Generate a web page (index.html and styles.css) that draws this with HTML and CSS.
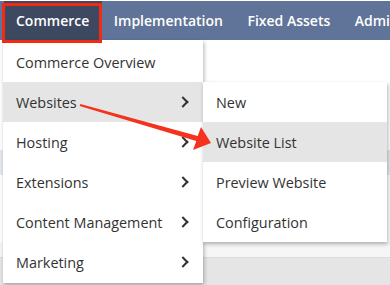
FILE: index.html
```html
<!DOCTYPE html>
<html lang="en">
<head>
    <meta charset="UTF-8">
    <meta name="viewport" content="width=device-width, initial-scale=1.0">
    <title>Commerce menu</title>
    <link rel="stylesheet" href="styles.css">
</head>
<body>
    <div class="page">
        <nav class="topnav">
            <a class="tab active">Commerce</a>
            <a class="tab">Implementation</a>
            <a class="tab">Fixed Assets</a>
            <a class="tab">Administration</a>
        </nav>

        <div class="content">
            <div class="band-white"></div>
            <div class="band-blue"></div>
            <div class="band-white tall"></div>
            <div class="band-light"></div>
            <div class="band-gray"></div>
        </div>

        <!-- dropdown -->
        <ul class="menu">
            <li class="item">Commerce Overview</li>
            <li class="item has-sub hover">Websites <span class="chev"></span></li>
            <li class="item has-sub">Hosting <span class="chev"></span></li>
            <li class="item has-sub">Extensions <span class="chev"></span></li>
            <li class="item has-sub">Content Management <span class="chev"></span></li>
            <li class="item has-sub">Marketing <span class="chev"></span></li>
        </ul>

        <ul class="submenu">
            <li class="item">New</li>
            <li class="item hover">Website List</li>
            <li class="item">Preview Website</li>
            <li class="item">Configuration</li>
        </ul>

        <!-- annotations -->
        <div class="highlight-box"></div>
        <svg class="arrow" width="390" height="285" viewBox="0 0 390 285">
            <polygon points="80.3,104 197.7,136.1 201,127 211,143 193,150 196.3,140.9 79.7,106" fill="#f4321d"/>
        </svg>
    </div>
</body>
</html>
```

FILE: styles.css
```css
body {
    margin: 0;
    background-color: #fff;
    font-family: "Open Sans", Arial, sans-serif;
}

.page {
    position: relative;
    width: 390px;
    height: 285px;
    overflow: hidden;
}

.topnav {
    display: flex;
    height: 39px;
    margin-top: 1px;
    padding-left: 4px;
    background-color: #5f7498;
    white-space: nowrap;
}

.tab {
    display: flex;
    align-items: center;
    padding: 0 12.5px 0 12px;
    color: #fff;
    font-size: 14px;
    font-weight: 600;
}

.tab.active {
    background-color: #3c4960;
}

.content {
    display: flex;
    flex-direction: column;
}

.band-white {
    height: 110px;
    background-color: #fff;
}

.band-white.tall {
    height: 67px;
}

.band-blue {
    height: 25px;
    background-color: #e4e9ef;
}

.band-light {
    height: 15px;
    background-color: #f6f6f6;
}

.band-gray {
    height: 40px;
    background-color: #e5e5e5;
    border-top: 1px solid #dcdcdc;
}

.menu,
.submenu {
    position: absolute;
    margin: 0;
    padding: 0;
    list-style: none;
    background-color: #fff;
    box-shadow: 1px 2px 4px rgba(0, 0, 0, 0.3);
}

.menu {
    left: 3px;
    top: 40px;
    width: 200px;
    padding: 2px 0 1px;
}

.submenu {
    left: 203px;
    top: 82px;
    width: 184px;
}

.item {
    display: flex;
    align-items: center;
    justify-content: space-between;
    height: 40px;
    padding: 0 14px 0 13px;
    color: #333;
    font-size: 14.4px;
}

.item.hover {
    background-color: #e5e5e5;
}

.chev {
    width: 6px;
    height: 6px;
    margin-right: 2px;
    border-top: 2px solid #333;
    border-right: 2px solid #333;
    transform: rotate(45deg);
}

.highlight-box {
    position: absolute;
    left: 2px;
    top: 3px;
    width: 94px;
    height: 34px;
    border: 3px solid #f22a14;
}

.arrow {
    position: absolute;
    left: 0;
    top: 0;
}
```
